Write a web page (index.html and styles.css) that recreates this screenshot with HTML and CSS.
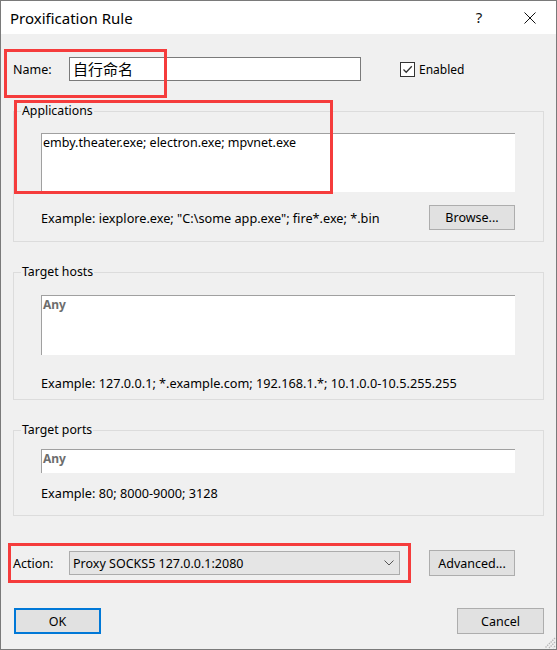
FILE: index.html
```html
<!DOCTYPE html>
<html>
<head>
<meta charset="utf-8">
<title>Proxification Rule</title>
<link rel="stylesheet" href="styles.css">
</head>
<body>
<div class="window">
  <div class="titlebar">
    <span class="title">Proxification Rule</span>
    <span class="tb-btn tb-help">?</span>
    <span class="tb-btn tb-close">
      <svg width="12" height="12" viewBox="0 0 12 12"><path d="M0.5 0.5 L11.5 11.5 M11.5 0.5 L0.5 11.5" stroke="#111" stroke-width="1" fill="none"/></svg>
    </span>
  </div>
  <div class="content">
    <div class="name-row">
      <span class="lbl">Name:</span>
      <div class="name-input">自行命名</div>
      <span class="check">
        <svg width="13" height="13" viewBox="0 0 13 13"><path d="M2.5 6.5 L5.2 9.2 L10.8 3.3" stroke="#333" stroke-width="1.3" fill="none"/></svg>
      </span>
      <span class="check-lbl">Enabled</span>
    </div>

    <fieldset class="group g-apps">
      <legend>Applications</legend>
      <div class="gbody">
        <div class="area area-apps">emby.theater.exe; electron.exe; mpvnet.exe</div>
        <div class="ex-row">
          <span class="ex-text">Example: iexplore.exe; "C:\some app.exe"; fire*.exe; *.bin</span>
          <span class="btn btn-browse">Browse...</span>
        </div>
      </div>
    </fieldset>

    <fieldset class="group g-hosts">
      <legend>Target hosts</legend>
      <div class="gbody">
        <div class="area area-hosts"><span class="any">Any</span></div>
        <div class="ex-text ex-hosts">Example: 127.0.0.1; *.example.com; 192.168.1.*; 10.1.0.0-10.5.255.255</div>
      </div>
    </fieldset>

    <fieldset class="group g-ports">
      <legend>Target ports</legend>
      <div class="gbody">
        <div class="area area-ports"><span class="any">Any</span></div>
        <div class="ex-text ex-ports">Example: 80; 8000-9000; 3128</div>
      </div>
    </fieldset>

    <div class="action-row">
      <span class="lbl">Action:</span>
      <div class="combo">
        <span>Proxy SOCKS5 127.0.0.1:2080</span>
        <svg width="10" height="6" viewBox="0 0 10 6"><path d="M0.5 0.5 L5 5 L9.5 0.5" stroke="#555" stroke-width="1" fill="none"/></svg>
      </div>
      <span class="btn btn-adv">Advanced...</span>
    </div>

    <div class="bottom-row">
      <span class="btn btn-ok">OK</span>
      <span class="btn btn-cancel">Cancel</span>
    </div>
  </div>

  <svg class="grip" width="13" height="13" viewBox="0 0 13 13">
    <path d="M12 2 L2 12 M12 6 L6 12 M12 10 L10 12" stroke="#b8b8b8" stroke-width="1.4" stroke-dasharray="1.4 1" fill="none"/>
  </svg>

  <div class="mark mark-name"></div>
  <div class="mark mark-apps"></div>
  <div class="mark mark-action"></div>
</div>
</body>
</html>
```

FILE: styles.css
```css
html, body {
  margin: 0;
  padding: 0;
  background: #f0f0f0;
}

.window {
  position: relative;
  width: 557px;
  height: 650px;
  box-sizing: border-box;
  border: 1px solid #7a7a7a;
  background: #f0f0f0;
  display: flex;
  flex-direction: column;
  font-family: "Noto Sans", "Open Sans", sans-serif;
  font-size: 12.5px;
  color: #000;
  overflow: hidden;
}

.titlebar {
  height: 33px;
  flex: none;
  background: #fff;
  display: flex;
  align-items: center;
  padding-left: 9px;
  padding-right: 3px;
}

.title {
  font-size: 15px;
  color: #000;
  flex: 1;
}

.tb-btn {
  width: 46px;
  height: 33px;
  display: flex;
  align-items: center;
  justify-content: center;
}

.tb-help {
  margin-right: 5px;
  font-size: 15px;
  color: #111;
  padding-bottom: 2px;
  box-sizing: border-box;
}

.content {
  flex: 1;
  padding: 23px 12px 0 12px;
  display: flex;
  flex-direction: column;
}

.lbl {
  width: 56px;
  flex: none;
}

.name-row {
  display: flex;
  align-items: center;
  height: 24px;
}

.name-input {
  width: 292px;
  height: 24px;
  box-sizing: border-box;
  border: 1px solid #7a7a7a;
  background: #fff;
  padding-left: 3px;
  font-family: "Noto Sans CJK SC", "Noto Sans", sans-serif;
  font-size: 15px;
  line-height: 21px;
}

.check {
  margin-left: 39px;
  width: 15px;
  height: 15px;
  box-sizing: border-box;
  border: 1px solid #333;
  background: #fff;
  display: flex;
  align-items: center;
  justify-content: center;
}

.check-lbl {
  margin-left: 4px;
  font-size: 12px;
}

.group {
  margin: 22px 0 0 0;
  padding: 0;
  border: 1px solid #dcdcdc;
  min-width: 0;
}

.group legend {
  margin-left: 7px;
  padding: 0 1px;
  line-height: 16px;
  font-size: 12.3px;
}

.gbody {
  padding: 0 28px 0 27px;
}

.area {
  background: #fff;
  border-top: 1px solid #a0a0a0;
  border-left: 1px solid #a0a0a0;
  box-sizing: border-box;
  padding: 1px 1px;
  line-height: 16px;
}

.area-apps {
  margin-top: 14px;
  height: 59px;
}

.area-hosts {
  margin-top: 15px;
  height: 60px;
}

.area-ports {
  margin-top: 11px;
  height: 24px;
}

.any {
  font-weight: bold;
  color: #6d6d6d;
  font-size: 12px;
}

.ex-row {
  margin-top: 13px;
  display: flex;
  align-items: center;
  justify-content: space-between;
  padding-bottom: 11px;
}

.ex-text {
  line-height: 16px;
  font-size: 12.7px;
}

.ex-hosts {
  margin-top: 20px;
  padding-bottom: 8px;
}

.ex-ports {
  margin-top: 12px;
  padding-bottom: 14px;
}

.btn {
  display: flex;
  align-items: center;
  justify-content: center;
  box-sizing: border-box;
  background: #e1e1e1;
  border: 1px solid #adadad;
  height: 25px;
}

.btn-browse {
  width: 86px;
}

.action-row {
  margin-top: 34px;
  display: flex;
  align-items: center;
  height: 26px;
}

.combo {
  width: 331px;
  height: 24px;
  box-sizing: border-box;
  border: 1px solid #acacac;
  background: #e5e5e5;
  display: flex;
  align-items: center;
  justify-content: space-between;
  padding: 0 5px 0 3px;
}

.btn-adv {
  margin-left: 29px;
  width: 86px;
  height: 26px;
}

.bottom-row {
  margin-top: 32px;
  display: flex;
  justify-content: space-between;
  padding-left: 1px;
}

.btn-ok,
.btn-cancel {
  width: 87px;
  height: 26px;
}

.btn-ok {
  border: 2px solid #0078d7;
}

.grip {
  position: absolute;
  right: 0;
  bottom: 0;
}

.mark {
  position: absolute;
  border: 3px solid #f53c3c;
  box-sizing: border-box;
  pointer-events: none;
}

.mark-name {
  left: 3px;
  top: 48px;
  width: 163px;
  height: 49px;
}

.mark-apps {
  left: 13px;
  top: 99px;
  width: 319px;
  height: 94px;
}

.mark-action {
  left: 7px;
  top: 542px;
  width: 403px;
  height: 40px;
}
```
